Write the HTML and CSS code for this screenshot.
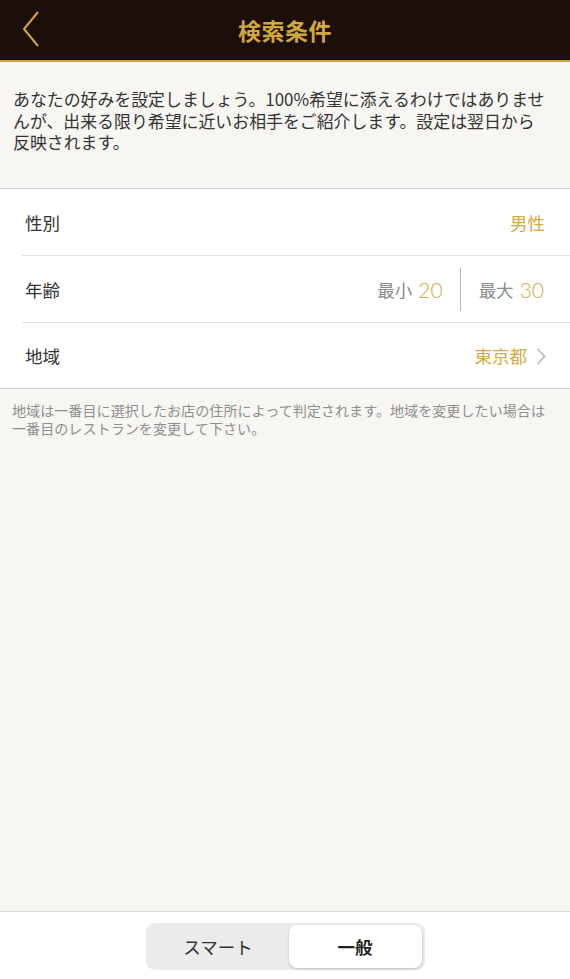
FILE: index.html
```html
<!DOCTYPE html>
<html lang="ja">
<head>
<meta charset="utf-8">
<title>検索条件</title>
<link rel="stylesheet" href="styles.css">
</head>
<body>
<div class="app">
  <header class="topbar">
    <button class="back" aria-label="戻る">
      <svg width="18" height="36" viewBox="0 0 18 36"><polyline points="16,1 2,18 16,35" fill="none" stroke="#d1a63a" stroke-width="2"/></svg>
    </button>
    <h1 class="title">検索条件</h1>
  </header>
  <main class="content">
    <p class="intro">あなたの好みを設定しましょう。100%希望に添えるわけではありませんが、出来る限り希望に近いお相手をご紹介します。設定は翌日から反映されます。</p>
    <ul class="list">
      <li class="row">
        <span class="label">性別</span>
        <span class="value gold">男性</span>
      </li>
      <li class="row">
        <span class="label">年齢</span>
        <span class="age">
          <span class="agecell"><span class="sub">最小</span> <span class="gold">20</span></span>
          <span class="vdiv"></span>
          <span class="agecell"><span class="sub">最大</span> <span class="gold">30</span></span>
        </span>
      </li>
      <li class="row last">
        <span class="label">地域</span>
        <span class="value gold">東京都
          <svg class="chev" width="10" height="17" viewBox="0 0 10 17"><polyline points="1.5,1 8.5,8.5 1.5,16" fill="none" stroke="#bdbdbd" stroke-width="1.8"/></svg>
        </span>
      </li>
    </ul>
    <p class="note">地域は一番目に選択したお店の住所によって判定されます。地域を変更したい場合は一番目のレストランを変更して下さい。</p>
  </main>
  <footer class="bottombar">
    <div class="segment">
      <span class="seg">スマート</span>
      <span class="seg active">一般</span>
    </div>
  </footer>
</div>
</body>
</html>
```
FILE: styles.css
```css
* { box-sizing: border-box; }
html, body { margin: 0; padding: 0; }
body {
  font-family: "Noto Sans CJK JP", "Noto Sans", sans-serif;
  background: #f7f6f2;
  color: #333;
}
.app {
  width: 570px;
  height: 979px;
  display: flex;
  flex-direction: column;
}
.topbar {
  height: 62px;
  background: #1c0f0a;
  border-bottom: 2px solid #c9a13c;
  display: flex;
  align-items: center;
  justify-content: center;
  position: relative;
}
.back {
  position: absolute;
  left: 22px;
  top: 11px;
  padding: 0;
  border: 0;
  background: none;
  line-height: 0;
}
.title {
  margin: 0;
  font-size: 23px;
  font-weight: 700;
  color: #d3a83b;
  letter-spacing: 0.5px;
}
.content {
  flex: 1;
  display: flex;
  flex-direction: column;
}
.intro {
  margin: 0;
  padding: 26px 20px 0 13px;
  height: 126px;
  font-size: 16.9px;
  line-height: 21.5px;
  color: #333;
}
.list {
  list-style: none;
  margin: 0;
  padding: 0 0 0 22px;
  background: #fff;
  border-top: 1px solid #cfcfcf;
  border-bottom: 1px solid #cfcfcf;
}
.row {
  height: 67px;
  display: flex;
  align-items: center;
  justify-content: space-between;
  padding: 0 25px 0 3px;
  border-bottom: 1px solid #e2e2e2;
  font-size: 17.5px;
}
.row.last { border-bottom: 0; height: 65px; }
.label { color: #333; }
.gold { color: #d3aa44; }
.value {
  display: flex;
  align-items: center;
  gap: 9px;
}
.chev { margin-right: -1px; margin-top: 1px; }
.age {
  display: flex;
  align-items: center;
  height: 100%;
  margin-right: 1px;
}
.agecell {
  display: flex;
  align-items: center;
  gap: 6px;
  font-size: 17.5px;
}
.agecell .gold { font-size: 21px; font-family: "Lato", "Noto Sans", sans-serif; font-weight: 300; }
.sub { color: #8a8a8a; }
.vdiv {
  width: 1px;
  height: 43px;
  background: #b5b5b5;
  margin: 0 18px 0 17px;
}
.note {
  margin: 0;
  padding: 12px 12px 0 12px;
  font-size: 14.1px;
  line-height: 18px;
  color: #8e8e8e;
}
.bottombar {
  height: 68px;
  background: #fff;
  border-top: 1px solid #d9d9d9;
  display: flex;
  justify-content: center;
  padding-top: 11px;
}
.segment {
  width: 279px;
  height: 47px;
  background: #ebebeb;
  border-radius: 9px;
  padding: 2px 3px 2px 2px;
  display: flex;
  margin-left: 0;
}
.seg {
  flex: 1;
  display: flex;
  align-items: center;
  justify-content: center;
  font-size: 17.5px;
  color: #333;
}
.seg.active {
  flex: 0 0 133px;
  background: #fff;
  border-radius: 8px;
  font-weight: 700;
  color: #222;
  box-shadow: 0 1px 3px rgba(0,0,0,0.2);
}
```
